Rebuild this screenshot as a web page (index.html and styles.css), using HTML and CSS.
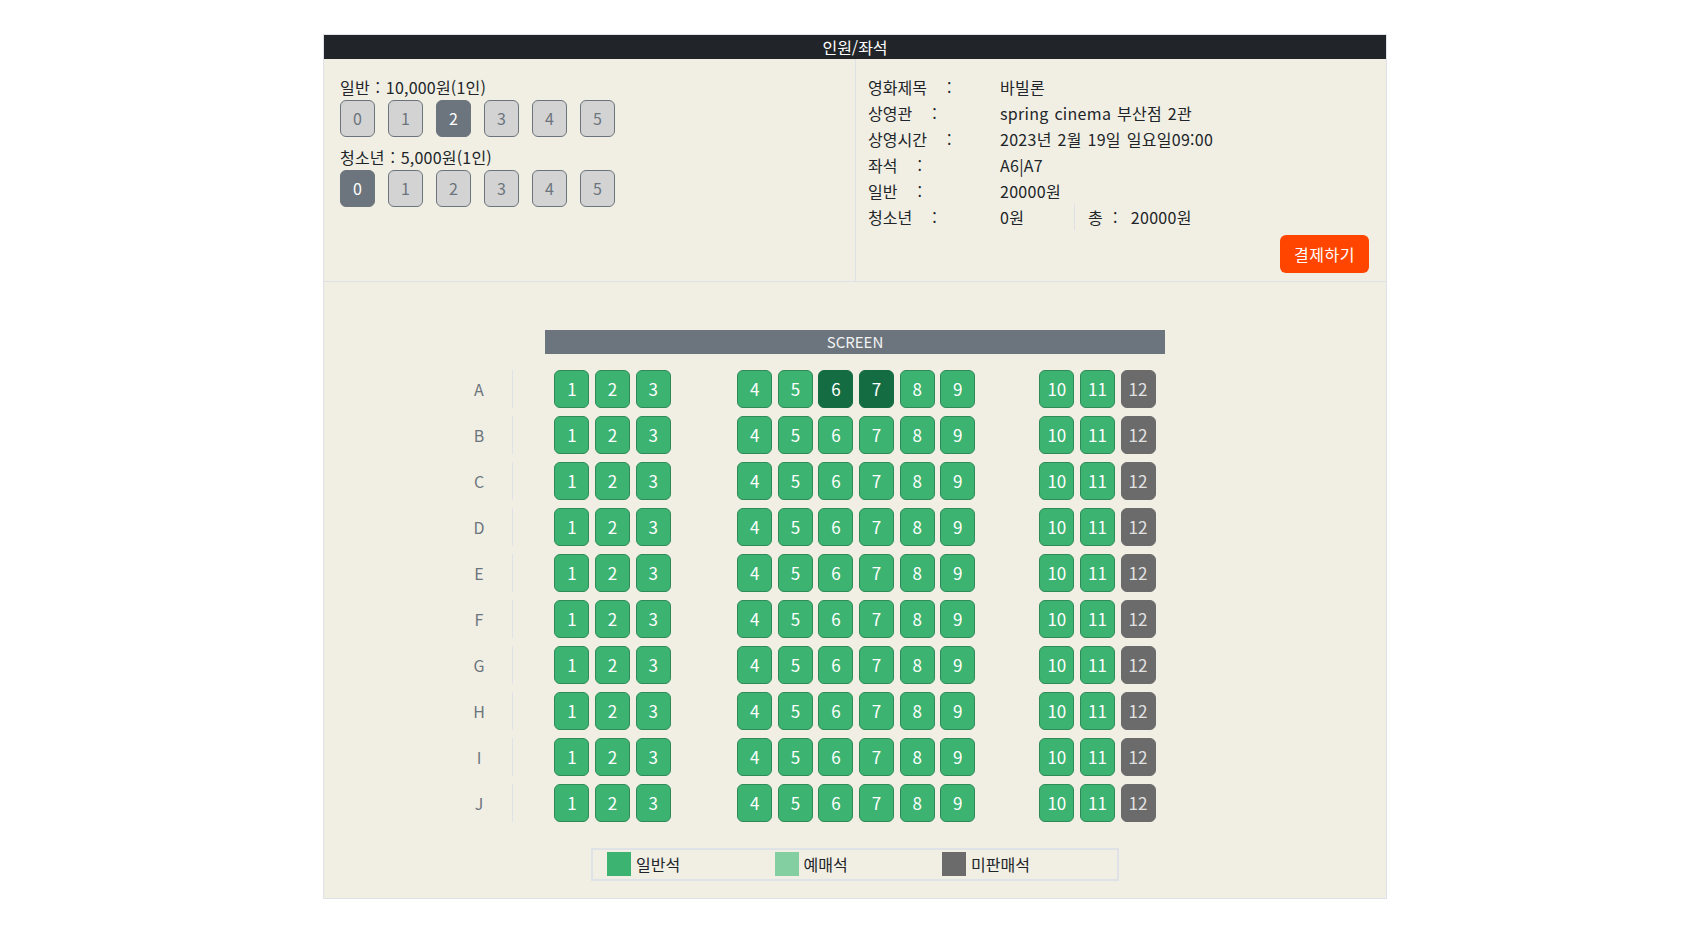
FILE: index.html
```html
<!DOCTYPE html>
<html lang="ko">
<head>
<meta charset="utf-8">
<title>인원/좌석</title>
<link rel="stylesheet" href="styles.css">
</head>
<body>
<div class="panel">
  <div class="panel-head">인원/좌석</div>
  <div class="top">
    <div class="people">
      <div class="people-label">일반 : 10,000원(1인)</div>
      <div class="counts">
        <button class="cnt">0</button><button class="cnt">1</button><button class="cnt on">2</button><button class="cnt">3</button><button class="cnt">4</button><button class="cnt">5</button>
      </div>
      <div class="people-label">청소년 : 5,000원(1인)</div>
      <div class="counts">
        <button class="cnt on">0</button><button class="cnt">1</button><button class="cnt">2</button><button class="cnt">3</button><button class="cnt">4</button><button class="cnt">5</button>
      </div>
    </div>
    <div class="info">
      <div class="info-row"><span class="info-key">영화제목<span class="colon">:</span></span><span class="info-val">바빌론</span></div>
      <div class="info-row"><span class="info-key">상영관<span class="colon">:</span></span><span class="info-val">spring cinema 부산점 2관</span></div>
      <div class="info-row"><span class="info-key">상영시간<span class="colon">:</span></span><span class="info-val">2023년 2월 19일 일요일09:00</span></div>
      <div class="info-row"><span class="info-key">좌석<span class="colon">:</span></span><span class="info-val">A6|A7</span></div>
      <div class="info-row"><span class="info-key">일반<span class="colon">:</span></span><span class="info-val">20000원</span></div>
      <div class="info-row"><span class="info-key">청소년<span class="colon">:</span></span><span class="info-split"><span class="youth info-val">0원</span><span class="total info-val">총<span class="colon2">:</span>20000원</span></span></div>
      <div class="pay-wrap"><button class="pay">결제하기</button></div>
    </div>
  </div>
  <div class="hall">
    <div class="screen">SCREEN</div>
    <div class="seat-rows">
      <div class="seat-row"><div class="row-label">A</div><div class="seats"><button class="seat">1</button><button class="seat">2</button><button class="seat">3</button><button class="seat aisle1">4</button><button class="seat">5</button><button class="seat picked">6</button><button class="seat picked">7</button><button class="seat">8</button><button class="seat">9</button><button class="seat aisle2">10</button><button class="seat">11</button><button class="seat closed">12</button></div><div class="row-spacer"></div></div>
      <div class="seat-row"><div class="row-label">B</div><div class="seats"><button class="seat">1</button><button class="seat">2</button><button class="seat">3</button><button class="seat aisle1">4</button><button class="seat">5</button><button class="seat">6</button><button class="seat">7</button><button class="seat">8</button><button class="seat">9</button><button class="seat aisle2">10</button><button class="seat">11</button><button class="seat closed">12</button></div><div class="row-spacer"></div></div>
      <div class="seat-row"><div class="row-label">C</div><div class="seats"><button class="seat">1</button><button class="seat">2</button><button class="seat">3</button><button class="seat aisle1">4</button><button class="seat">5</button><button class="seat">6</button><button class="seat">7</button><button class="seat">8</button><button class="seat">9</button><button class="seat aisle2">10</button><button class="seat">11</button><button class="seat closed">12</button></div><div class="row-spacer"></div></div>
      <div class="seat-row"><div class="row-label">D</div><div class="seats"><button class="seat">1</button><button class="seat">2</button><button class="seat">3</button><button class="seat aisle1">4</button><button class="seat">5</button><button class="seat">6</button><button class="seat">7</button><button class="seat">8</button><button class="seat">9</button><button class="seat aisle2">10</button><button class="seat">11</button><button class="seat closed">12</button></div><div class="row-spacer"></div></div>
      <div class="seat-row"><div class="row-label">E</div><div class="seats"><button class="seat">1</button><button class="seat">2</button><button class="seat">3</button><button class="seat aisle1">4</button><button class="seat">5</button><button class="seat">6</button><button class="seat">7</button><button class="seat">8</button><button class="seat">9</button><button class="seat aisle2">10</button><button class="seat">11</button><button class="seat closed">12</button></div><div class="row-spacer"></div></div>
      <div class="seat-row"><div class="row-label">F</div><div class="seats"><button class="seat">1</button><button class="seat">2</button><button class="seat">3</button><button class="seat aisle1">4</button><button class="seat">5</button><button class="seat">6</button><button class="seat">7</button><button class="seat">8</button><button class="seat">9</button><button class="seat aisle2">10</button><button class="seat">11</button><button class="seat closed">12</button></div><div class="row-spacer"></div></div>
      <div class="seat-row"><div class="row-label">G</div><div class="seats"><button class="seat">1</button><button class="seat">2</button><button class="seat">3</button><button class="seat aisle1">4</button><button class="seat">5</button><button class="seat">6</button><button class="seat">7</button><button class="seat">8</button><button class="seat">9</button><button class="seat aisle2">10</button><button class="seat">11</button><button class="seat closed">12</button></div><div class="row-spacer"></div></div>
      <div class="seat-row"><div class="row-label">H</div><div class="seats"><button class="seat">1</button><button class="seat">2</button><button class="seat">3</button><button class="seat aisle1">4</button><button class="seat">5</button><button class="seat">6</button><button class="seat">7</button><button class="seat">8</button><button class="seat">9</button><button class="seat aisle2">10</button><button class="seat">11</button><button class="seat closed">12</button></div><div class="row-spacer"></div></div>
      <div class="seat-row"><div class="row-label">I</div><div class="seats"><button class="seat">1</button><button class="seat">2</button><button class="seat">3</button><button class="seat aisle1">4</button><button class="seat">5</button><button class="seat">6</button><button class="seat">7</button><button class="seat">8</button><button class="seat">9</button><button class="seat aisle2">10</button><button class="seat">11</button><button class="seat closed">12</button></div><div class="row-spacer"></div></div>
      <div class="seat-row"><div class="row-label">J</div><div class="seats"><button class="seat">1</button><button class="seat">2</button><button class="seat">3</button><button class="seat aisle1">4</button><button class="seat">5</button><button class="seat">6</button><button class="seat">7</button><button class="seat">8</button><button class="seat">9</button><button class="seat aisle2">10</button><button class="seat">11</button><button class="seat closed">12</button></div><div class="row-spacer"></div></div>
    </div>
    <div class="legend">
      <div class="legend-item"><span class="swatch sw-normal"></span>일반석</div>
      <div class="legend-item"><span class="swatch sw-booked"></span>예매석</div>
      <div class="legend-item"><span class="swatch sw-closed"></span>미판매석</div>
    </div>
  </div>
</div>
</body>
</html>
```
FILE: styles.css
```css
* { box-sizing: border-box; }

body {
  margin: 0;
  background: #ffffff;
  font-family: "Noto Sans CJK KR", "Noto Sans", sans-serif;
  font-size: 16px;
  color: #212529;
}

button {
  font-family: inherit;
  padding: 0;
  cursor: pointer;
}

.panel {
  width: 1064px;
  margin: 34px 0 0 323px;
  border: 1px solid #dee2e6;
  background: #f1efe4;
}

.panel-head {
  height: 24px;
  background: #212529;
  color: #ffffff;
  text-align: center;
  font-size: 16px;
  line-height: 24px;
}

.top {
  display: grid;
  grid-template-columns: 531px 531px;
  height: 223px;
  border-bottom: 1px solid #dee2e6;
}

.people {
  padding: 15px 16px 0 16px;
}

.people-label {
  height: 26px;
  line-height: 26px;
  font-size: 16px;
  letter-spacing: 0.2px;
  word-spacing: 1px;
}

.counts {
  display: flex;
  gap: 13px;
  margin-bottom: 7px;
}

.cnt {
  width: 35px;
  height: 37px;
  border: 1px solid #6c757d;
  border-radius: 6px;
  background: #d3d3d3;
  color: #6c757d;
  font-size: 16px;
  line-height: 35px;
}

.cnt.on {
  background: #6c757d;
  color: #ffffff;
}

.info {
  border-left: 1px solid #dee2e6;
  padding: 15px 17px 0 12px;
}

.info-row {
  display: grid;
  grid-template-columns: 132px auto;
  height: 26px;
  line-height: 26px;
  font-size: 16px;
}

.info-val {
  letter-spacing: 0.3px;
  word-spacing: 1px;
}

.colon {
  margin-left: 20px;
}

.info-split {
  display: flex;
}

.youth {
  width: 75px;
  border-right: 1px solid #dee2e6;
}

.total {
  padding-left: 13px;
}

.colon2 {
  margin: 0 13px 0 10px;
}

.pay-wrap {
  display: flex;
  justify-content: flex-end;
  margin-top: 5px;
}

.pay {
  width: 89px;
  height: 38px;
  border: none;
  border-radius: 6px;
  background: #ff4500;
  color: #ffffff;
  font-size: 16px;
  letter-spacing: 0.5px;
}

.hall {
  padding: 48px 0 17px;
}

.screen {
  width: 620px;
  height: 24px;
  margin: 0 auto;
  background: #6c757d;
  color: #f2f2f2;
  text-align: center;
  font-size: 15px;
  line-height: 24px;
}

.seat-rows {
  display: flex;
  flex-direction: column;
  gap: 8px;
  margin-top: 16px;
}

.seat-row {
  display: flex;
  justify-content: center;
}

.row-label {
  width: 68px;
  height: 38px;
  margin-right: 41px;
  border-right: 1px solid #dee2e6;
  color: #6c757d;
  text-align: center;
  line-height: 38px;
  font-size: 16px;
}

.row-spacer {
  width: 109px;
}

.seats {
  display: flex;
  gap: 5.6px;
}

.seat {
  width: 35px;
  height: 38px;
  border: 1px solid #2e8b57;
  border-radius: 6px;
  background: #3cb371;
  color: #ffffff;
  font-size: 17px;
  line-height: 36px;
}

.seat.aisle1 { margin-left: 61px; }
.seat.aisle2 { margin-left: 58.5px; }

.seat.picked {
  background: #146c43;
  border-color: #146c43;
}

.seat.closed {
  background: #6b6b6b;
  border-color: #6b6b6b;
  color: #e2e2e2;
}

.legend {
  display: flex;
  width: 528px;
  height: 33px;
  margin: 25.5px auto 0;
  padding: 0 14px;
  border: 2px solid #dfe2e6;
  align-items: center;
}

.legend-item {
  display: flex;
  flex-shrink: 0;
  align-items: center;
  width: 167.5px;
  font-size: 16px;
  line-height: 24px;
}

.swatch {
  width: 24px;
  height: 24px;
  margin-right: 5px;
}

.sw-normal { background: #3cb371; }
.sw-booked { background: #84cfa1; }
.sw-closed { background: #6b6b6b; }
```
